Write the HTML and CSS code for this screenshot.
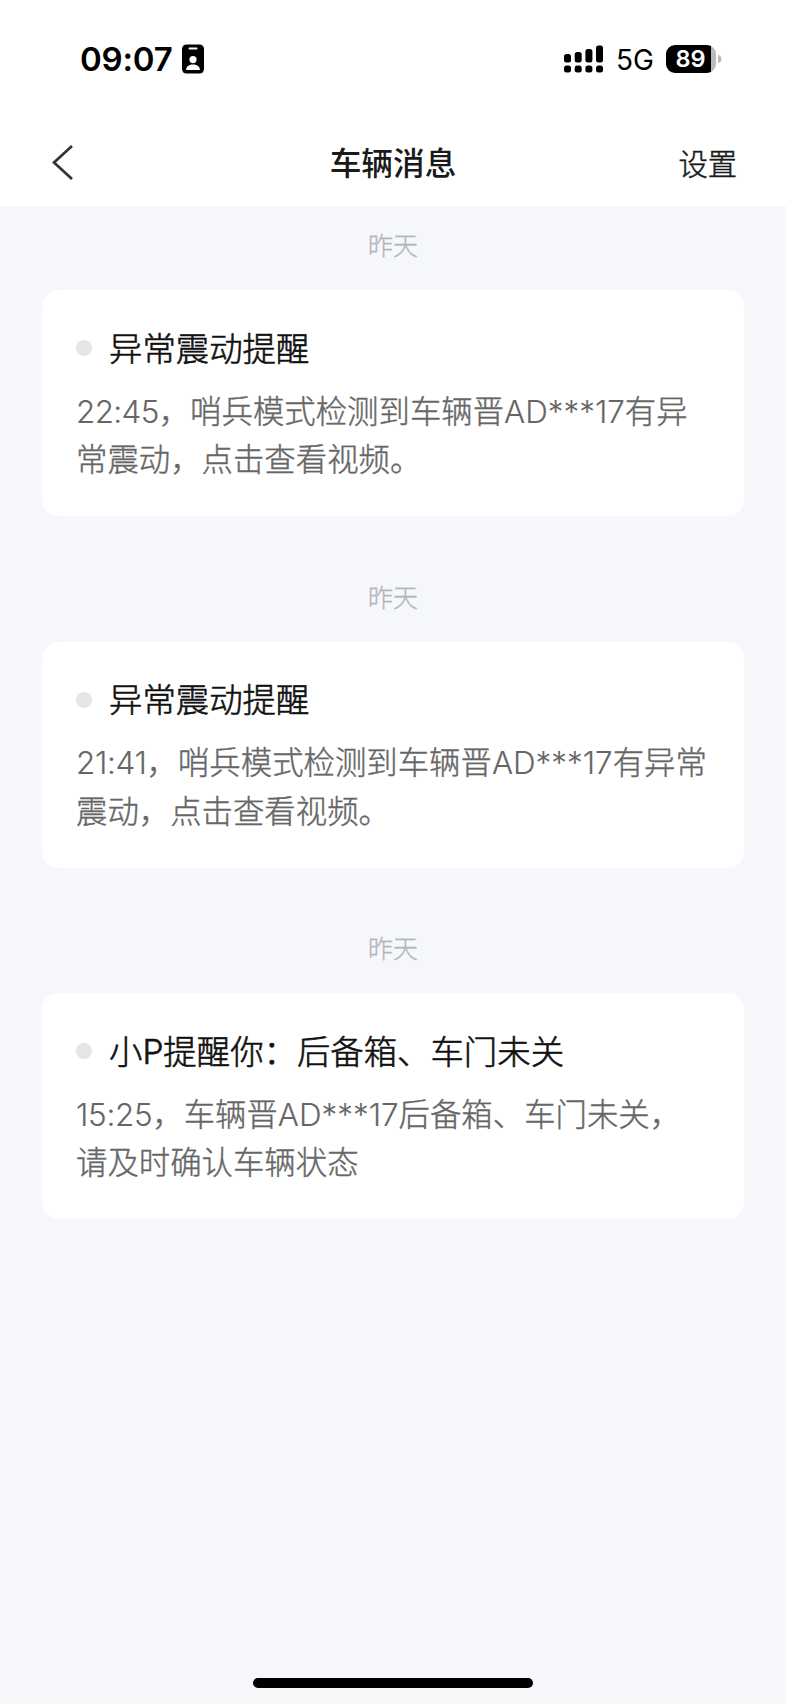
FILE: index.html
```html
<!DOCTYPE html>
<html lang="zh-CN">
<head>
<meta charset="utf-8">
<title>车辆消息</title>
<link rel="stylesheet" href="styles.css">
</head>
<body>
<div class="screen">
  <header class="header">
    <div class="status">
      <span class="clock">09:07</span>
      <svg class="badge" width="22" height="30" viewBox="0 0 22 30"><rect width="22" height="29" y=".5" rx="4.5"/><rect x="6.5" y="3.6" width="9" height="2" rx="1" fill="#fff"/><circle cx="11" cy="15.6" r="3.6" fill="#fff"/><path d="M4 26c.4-3.700 3.200-5.400 7-5.400s6.600 1.700 7 5.400z" fill="#fff"/></svg>
      <svg class="signal" width="40" height="28" viewBox="0 0 40 28"><rect x="0" y="9" width="7" height="8.500" rx="2.500"/><rect x="10.700" y="7" width="7" height="10.500" rx="2.500"/><rect x="21.400" y="4" width="7" height="13.500" rx="2.500"/><rect x="32" y="0.500" width="7" height="17" rx="2.500"/><rect x="0" y="20.500" width="7" height="7" rx="2.500"/><rect x="10.700" y="20.500" width="7" height="7" rx="2.500"/><rect x="21.400" y="20.500" width="7" height="7" rx="2.500"/><rect x="32" y="20.500" width="7" height="7" rx="2.500"/></svg>
      <span class="network">5G</span>
      <div class="battery"><span class="level">89</span></div>
      <svg class="cap" width="4" height="10" viewBox="0 0 4 10"><path d="M0 1Q3.500 1.500 3.500 5T0 9z" fill="#bbb"/></svg>
    </div>
    <nav class="nav">
      <svg class="back" width="22" height="36" viewBox="0 0 22 36"><path d="M21 2L3 18.500L21 35" fill="none" stroke="#333" stroke-width="2.700"/></svg>
      <h1 class="title">车辆消息</h1>
      <span class="settings">设置</span>
    </nav>
  </header>
  <main class="feed">
    <section class="group">
      <time class="day">昨天</time>
      <article class="card">
        <h2 class="subject"><i class="dot"></i><span class="label">异常震动提醒</span></h2>
        <p class="body"><span class="time wide">22:45</span>，哨兵模式检测到车辆晋<span class="plate">AD***17</span>有异<br>常震动，点击查看视频。</p>
      </article>
    </section>
    <section class="group">
      <time class="day">昨天</time>
      <article class="card">
        <h2 class="subject"><i class="dot"></i><span class="label">异常震动提醒</span></h2>
        <p class="body"><span class="time">21:41</span>，哨兵模式检测到车辆晋<span class="plate">AD***17</span>有异常<br>震动，点击查看视频。</p>
      </article>
    </section>
    <section class="group">
      <time class="day">昨天</time>
      <article class="card">
        <h2 class="subject"><i class="dot"></i><span class="label">小P提醒你：后备箱、车门未关</span></h2>
        <p class="body"><span class="time">15:25</span>，车辆晋<span class="plate">AD***17</span>后备箱、车门未关，<br>请及时确认车辆状态</p>
      </article>
    </section>
  </main>
  <div class="home"></div>
</div>
</body>
</html>
```
FILE: styles.css
```css
* { box-sizing: border-box; margin: 0; padding: 0; }
body { background: #f5f7fb; font-family: Inter, "Noto Sans CJK SC", sans-serif; color: #1a1a1a; }
.screen { width: 786px; height: 1704px; display: flex; flex-direction: column; overflow: hidden; }
.header { height: 206px; background: #fff; flex: none; }
.status { display: flex; align-items: center; height: 118px; padding: 0 60px 0 80px; color: #000; }
.status > * { flex: none; }
.clock { width: 102px; font-size: 33px; font-weight: 600; letter-spacing: -.2px; white-space: nowrap; }
.signal { margin-left: 360px; }
.network { margin-left: 12px; width: 50px; padding-top: 2px; font-size: 28px; white-space: nowrap; }
.battery { width: 50px; height: 28px; border-radius: 9px; background: linear-gradient(90deg, #000 45px, #bbb 45px); }
.level { display: block; width: 49px; text-align: center; line-height: 28px; font-size: 23.5px; font-weight: 600; color: #fff; }
.cap { margin-left: 1.5px; }
.nav { display: grid; grid-template-columns: 110px 1fr 110px; align-items: center; height: 88px; padding: 0 49px 0 51px; }
.title { padding: 4px 2px 0 0; text-align: center; font-size: 31.7px; font-weight: 500; line-height: 48px; }
.settings { padding-top: 5px; text-align: right; font-size: 29.3px; font-weight: 300; line-height: 44px; -webkit-text-stroke: .5px #1a1a1a; }
.feed { flex: 1; padding: 0 42px; }
.group { height: 351.6px; }
.day { display: block; height: 84px; padding-top: 22px; text-align: center; font-size: 25px; line-height: 36px; font-weight: 300; color: #b4b6b9; -webkit-text-stroke: .3px #b4b6b9; }
.card { height: 226px; border-radius: 16px; background: #fff; padding: 34px 33px 0 34px; }
.subject { display: flex; align-items: center; gap: 17px; height: 48px; font-size: 33.4px; font-weight: 300; color: #111; white-space: nowrap; -webkit-text-stroke: .6px #111; }
.label { padding-bottom: 4px; }
.dot { width: 16px; height: 16px; border-radius: 50%; background: #e5e5e5; flex: none; }
.body { margin-top: 15.5px; font-size: 31.4px; line-height: 48.4px; font-weight: 300; color: #666; white-space: nowrap; -webkit-text-stroke: .4px #666; }
.time, .plate { -webkit-text-stroke-width: .1px; }
.time { letter-spacing: -.3px; }
.wide { letter-spacing: -.6px; }
.home { width: 280px; height: 10px; border-radius: 5px; background: #000; margin: 0 auto 16px; flex: none; }
```
